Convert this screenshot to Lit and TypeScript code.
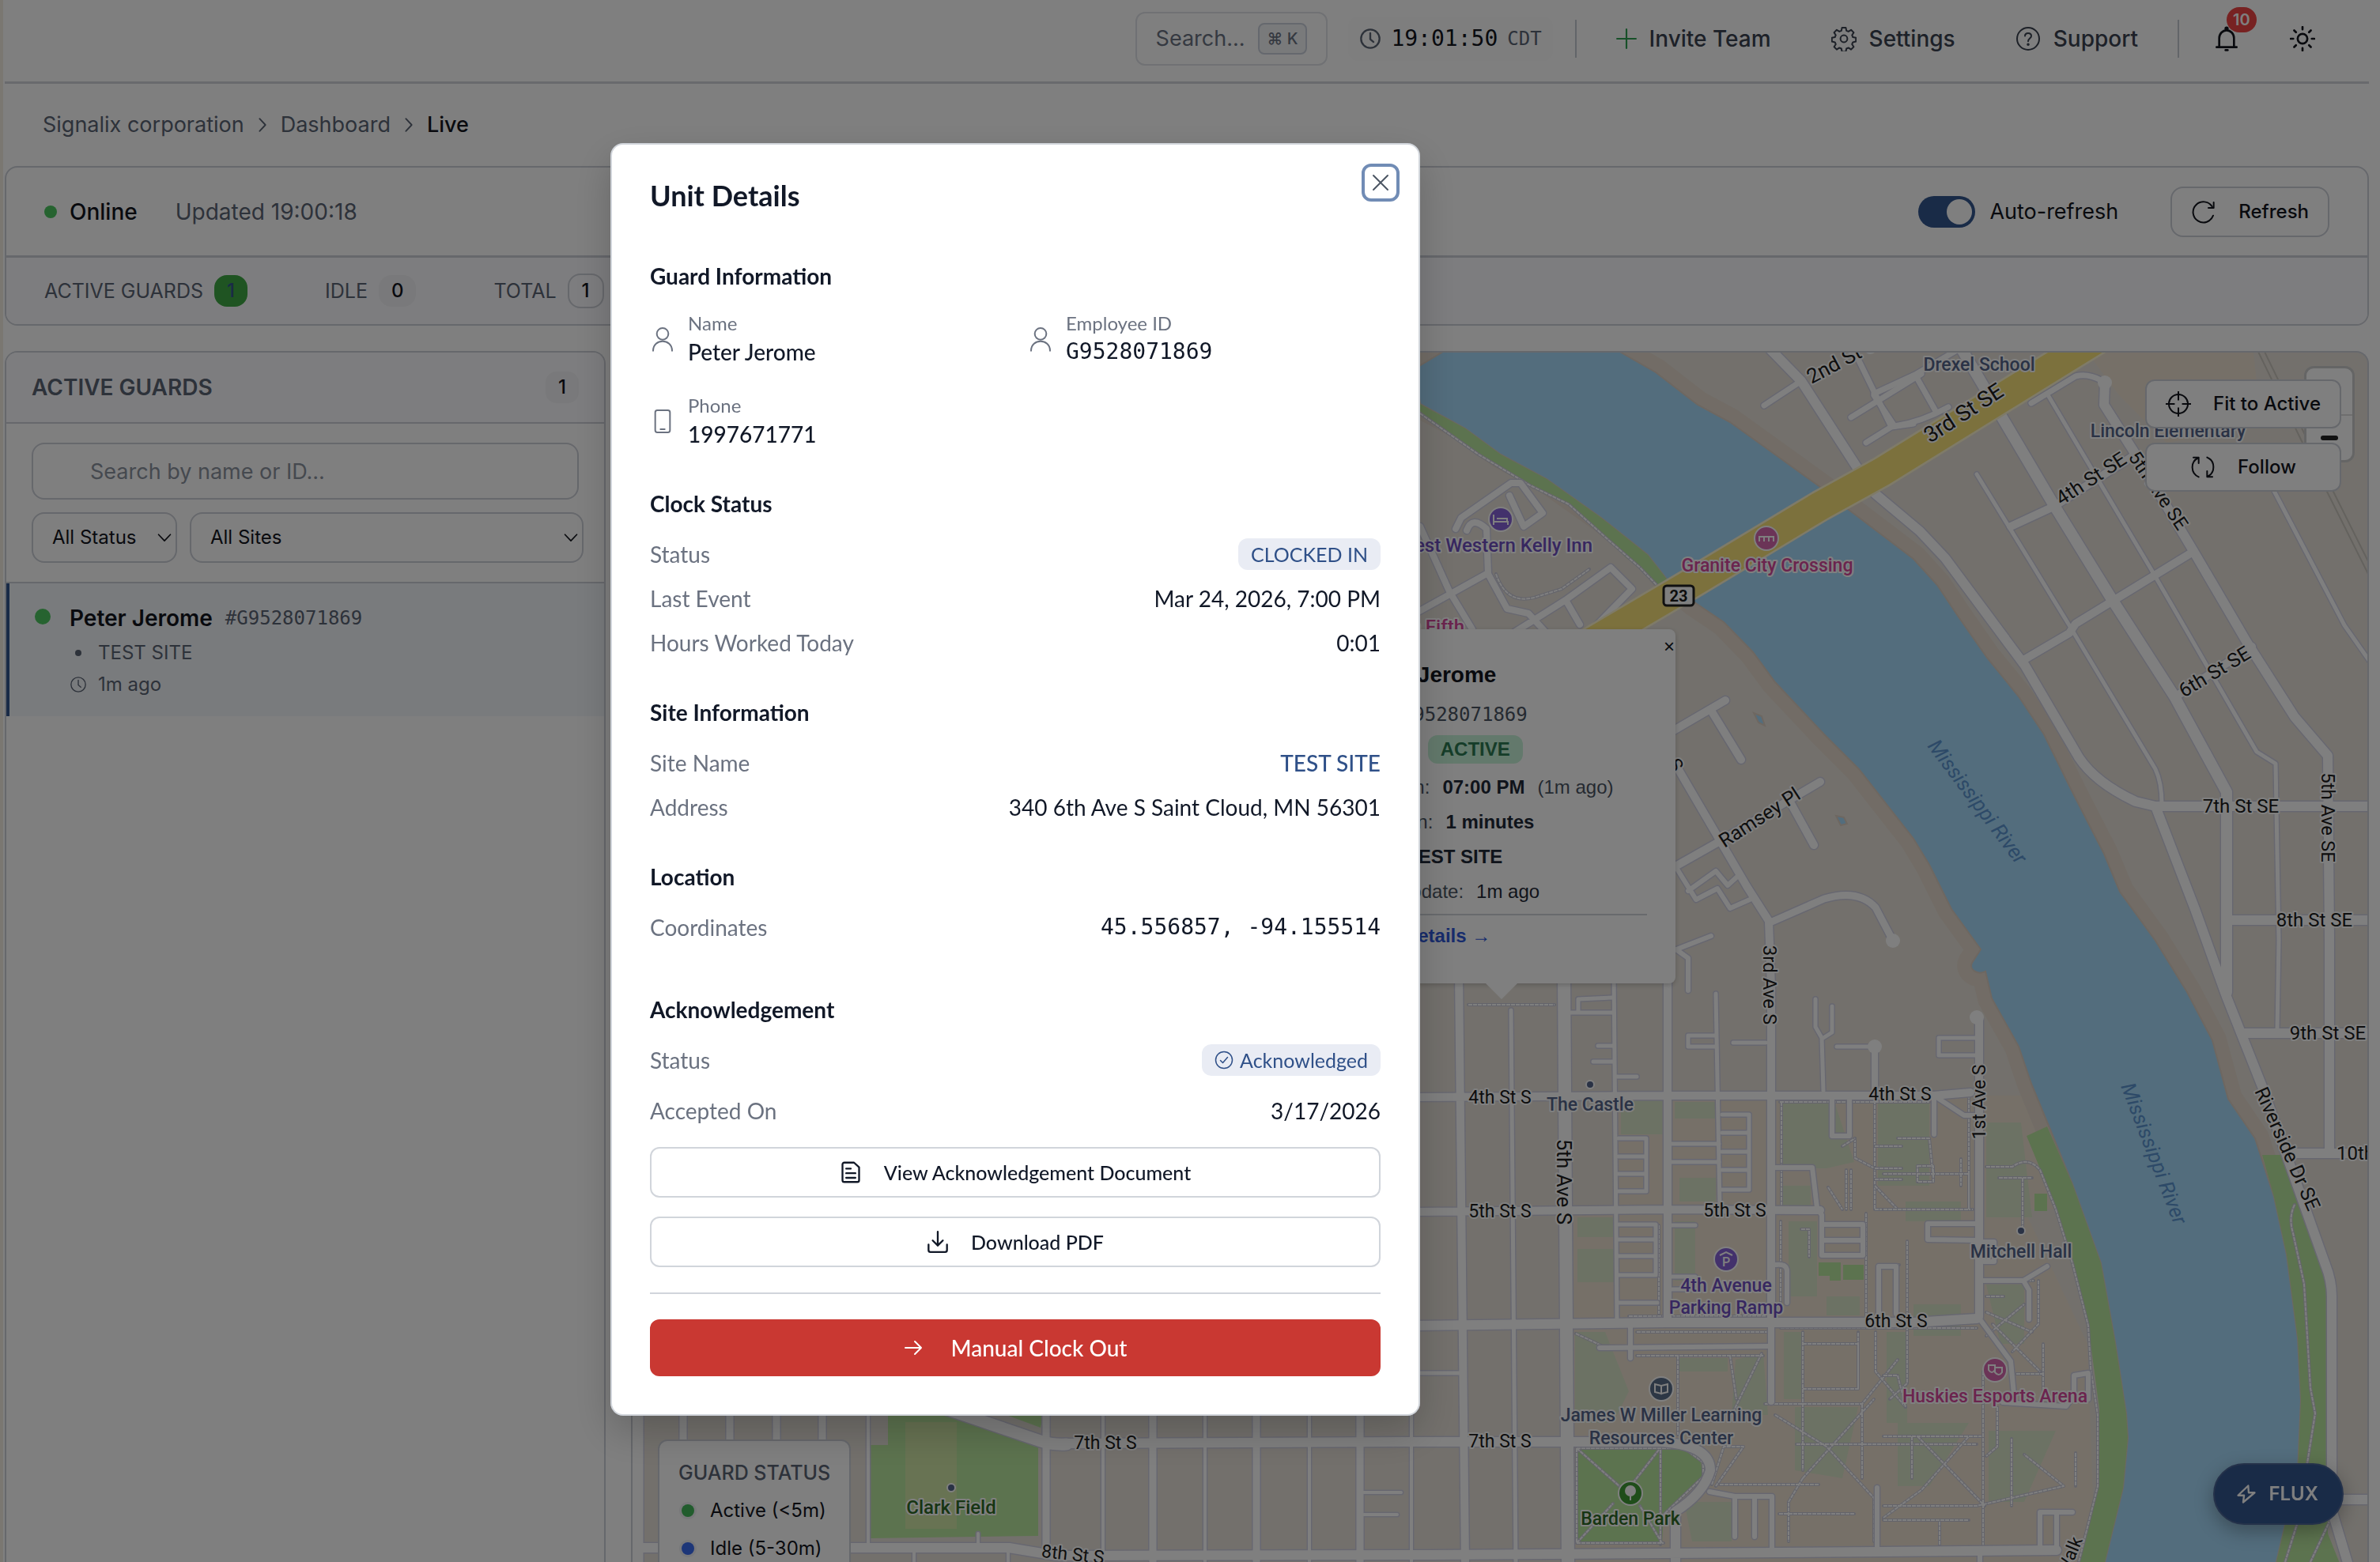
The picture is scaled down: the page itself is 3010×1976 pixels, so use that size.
import { LitElement, html, svg, css, nothing } from "lit";
import { customElement, state } from "lit/decorators.js";

/* ---------- icons (24-unit grid, stroked) ---------- */

const shapes = {
  clock: svg`<circle cx="12" cy="12" r="10"/><path d="M12 6v6.5l3.5 3"/>`,
  plus: svg`<path d="M12 1v22M1 12h22"/>`,
  gear: svg`<circle cx="12" cy="12" r="3.3"/><path d="M10.2 1.5h3.6l.6 2.9 1.9.8 2.5-1.6 2.5 2.5-1.6 2.5.8 1.9 2.9.6v3.6l-2.9.6-.8 1.9 1.6 2.5-2.5 2.5-2.5-1.6-1.9.8-.6 2.9h-3.6l-.6-2.9-1.9-.8-2.5 1.6-2.5-2.5 1.6-2.5-.8-1.9-2.9-.6v-3.6l2.9-.6.8-1.9-1.6-2.5 2.5-2.5 2.5 1.6 1.9-.8z"/>`,
  help: svg`<circle cx="12" cy="12" r="10.5"/><path d="M9 9.4c0-3.6 6-3.6 6 0 0 2.2-3 2.4-3 5"/><circle cx="12" cy="17.4" r=".6" fill="currentColor"/>`,
  bell: svg`<path d="M2.500 20h19M5 20v-8.500a7 7.500 0 0 1 14 0V20"/><circle cx="12" cy="2.300" r="1" fill="currentColor"/><path d="M11 22.800h2"/>`,
  sun: svg`<circle cx="12" cy="12" r="4.600"/><path d="M12 .8v2.400M12 20.800v2.400M.8 12h2.400M20.800 12h2.400M4.100 4.100l1.700 1.700M18.200 18.200l1.700 1.700M4.100 19.900l1.700-1.700M18.200 5.800l1.700-1.700"/>`,
  refresh: svg`<path d="M21 15.500A9.800 9.800 0 1 1 20 7"/><path d="M21.500 3v5.200h-5"/>`,
  follow: svg`<path d="M8 21.300A10 10 0 0 1 7.500 3.200M3 2.800h5v5.500M16 2.700a10 10 0 0 1 .5 18.100M21 21.200h-5v-5.500"/>`,
  target: svg`<circle cx="12" cy="12" r="9"/><path d="M12 0v8M12 16v8M0 12h8M16 12h8"/>`,
  bolt: svg`<path d="M14 3 3 13.500h6.500L8.500 21 21 10.500h-6.500z"/>`,
  user: svg`<circle cx="12" cy="7" r="5.500"/><path d="M3 23c0-12 18-12 18 0"/>`,
  phone: svg`<rect x="5" y="1.500" width="14" height="21" rx="2"/><path d="M10 19.500h4"/>`,
  check: svg`<circle cx="12" cy="12" r="10.500"/><path d="m7.500 12.500 3 3 6-7"/>`,
  doc: svg`<path d="M3 3.500a2 2 0 0 1 2-2h10.500l5.500 5v14a2 2 0 0 1-2 2H5a2 2 0 0 1-2-2zM7 8h5M7 13h10M7 18h10"/>`,
  download: svg`<path d="M12 1v15M6.500 10.500 12 16l5.500-5.500M2 15v6a2 2 0 0 0 2 2h16a2 2 0 0 0 2-2v-6"/>`,
  arrow: svg`<path d="M2 12h20M14 4l8 8-8 8"/>`,
  close: svg`<path d="M3 3l18 18M21 3 3 21"/>`,
  chevron: svg`<path d="M3 7.500 12 17l9-9.500"/>`,
  crumb: svg`<path d="M8 3.500l8 8.500-8 8.500"/>`,
};

const icon = (name: keyof typeof shapes, cls = "") => html`
  <svg class="icon ${cls}" viewBox="0 0 24 24" aria-hidden="true">${shapes[name]}</svg>
`;

const base = css`
  * {
    box-sizing: border-box;
  }
  :host {
    display: block;
    font-family: Inter, "Liberation Sans", sans-serif;
    font-size: 28px;
    line-height: 40px;
    color: #12151d;
  }
  button,
  input,
  select {
    font: inherit;
    color: inherit;
    margin: 0;
  }
  button {
    background: none;
    border: 0;
    padding: 0;
    cursor: pointer;
  }
  a {
    color: inherit;
    text-decoration: none;
  }
  h2,
  h3,
  p,
  dl,
  dd,
  dt,
  ol,
  ul {
    margin: 0;
    padding: 0;
    list-style: none;
  }
  .icon {
    width: 32px;
    height: 32px;
    flex: none;
    fill: none;
    stroke: currentColor;
    stroke-width: 1.5;
    stroke-linecap: round;
    stroke-linejoin: round;
  }
  .s24 {
    width: 24px;
    height: 24px;
  }
  .mono {
    font-family: "DejaVu Sans Mono", "Liberation Mono", monospace;
  }
`;

/* ---------- top bar ---------- */

@customElement("top-bar")
export class TopBar extends LitElement {
  static styles = [
    base,
    css`
      .bar {
        display: flex;
        align-items: center;
        justify-content: flex-end;
        height: 106px;
        padding: 0 68px 6px 0;
        border-bottom: 3px solid #d2d5db;
      }
      .search {
        display: flex;
        align-items: center;
        gap: 16px;
        height: 68px;
        padding: 0 24px;
        border: 2px solid #e0e3e8;
        border-radius: 12px;
        font-size: 27px;
        color: #6a7282;
      }
      kbd {
        font: 500 20px/36px Inter, "DejaVu Sans", sans-serif;
        padding: 0 10px;
        border: 2px solid #cbd1dc;
        border-radius: 8px;
        background: #f2f4f7;
      }
      .clock {
        display: flex;
        align-items: center;
        gap: 12px;
        margin: 0 28px 0 26px;
        padding: 8px 14px;
        border-radius: 12px;
        background: #fcfcfd;
      }
      .clock .icon,
      .clock small {
        color: #5b6474;
      }
      .clock .icon {
        width: 28px;
        height: 28px;
        stroke-width: 2;
      }
      .clock small {
        font-size: 24px;
      }
      .rule {
        width: 2px;
        height: 48px;
        background: #c5cad3;
      }
      nav {
        display: flex;
        gap: 76px;
        margin: 0 50px;
      }
      nav a {
        display: flex;
        align-items: center;
        gap: 16px;
        font-weight: 500;
        color: #3b4250;
      }
      nav .green {
        width: 26px;
        height: 26px;
        color: #2fa052;
      }
      .bell {
        position: relative;
        display: flex;
        margin: 0 64px 0 44px;
      }
      .count {
        position: absolute;
        left: 16px;
        top: -24px;
        padding: 0 8px;
        border-radius: 16px;
        background: #ef4444;
        color: #fff;
        font: 600 20px/32px Inter, sans-serif;
      }
      .theme {
        display: flex;
      }
      .theme .icon,
      .bell .icon,
      nav .green {
        stroke-width: 2;
      }
    `,
  ];

  render() {
    return html`
      <header class="bar">
        <button class="search">Search...<kbd>⌘ K</kbd></button>
        <div class="clock mono">${icon("clock")}<span>19:01:50</span><small>CDT</small></div>
        <span class="rule"></span>
        <nav aria-label="Main">
          <a href="#invite">${icon("plus", "green")}Invite Team</a>
          <a href="#settings">${icon("gear")}Settings</a>
          <a href="#support">${icon("help")}Support</a>
        </nav>
        <span class="rule"></span>
        <button class="bell" aria-label="Notifications">${icon("bell")}<span class="count">10</span></button>
        <button class="theme" aria-label="Toggle theme">${icon("sun")}</button>
      </header>
    `;
  }
}

/* ---------- status card ---------- */

@customElement("status-card")
export class StatusCard extends LitElement {
  static styles = [
    base,
    css`
      .card {
        border: 2px solid #cdd0d8;
        border-radius: 16px;
        overflow: hidden;
      }
      .live {
        display: flex;
        align-items: center;
        height: 114px;
        padding: 0 48px;
        border-bottom: 3px solid #cdd0d8;
      }
      .dot {
        width: 16px;
        height: 16px;
        margin-right: 16px;
        border-radius: 50%;
        background: #4cc760;
      }
      strong {
        font-weight: 500;
      }
      .updated {
        flex: 1;
        margin-left: 48px;
        color: #5b6474;
      }
      .auto {
        display: flex;
        align-items: center;
        gap: 18px;
        margin-right: 66px;
        font-size: 27px;
      }
      .auto input {
        appearance: none;
        display: flex;
        justify-content: flex-end;
        width: 72px;
        height: 40px;
        padding: 4px;
        border-radius: 20px;
        background: #33568f;
      }
      .auto input::before {
        content: "";
        width: 32px;
        border-radius: 50%;
        background: #fff;
      }
      .refresh {
        display: flex;
        align-items: center;
        gap: 28px;
        height: 64px;
        padding: 0 24px;
        border: 2px solid #cdd0d8;
        border-radius: 16px;
        font-size: 24px;
        font-weight: 500;
      }
      .stats {
        display: flex;
        align-items: center;
        gap: 98px;
        height: 84px;
        padding: 0 48px;
        background: #fbfbfe;
        font-size: 25px;
        color: #5b6474;
      }
      .stats div {
        display: flex;
        align-items: center;
        gap: 14px;
      }
      .stats dd {
        padding: 0 16px;
        border-radius: 16px;
        background: #f2f3f6;
        color: #12151d;
        font-size: 24px;
        font-weight: 500;
      }
      .stats .on {
        background: #3fa845;
        color: #33568f;
      }
      .stats .all {
        border: 2px solid #cdd0d8;
        background: none;
      }
    `,
  ];

  @state() private auto = true;

  render() {
    return html`
      <section class="card">
        <div class="live">
          <span class="dot"></span><strong>Online</strong>
          <span class="updated">Updated 19:00:18</span>
          <label class="auto">
            <input
              type="checkbox"
              role="switch"
              .checked=${this.auto}
              @change=${(e: Event) => (this.auto = (e.target as HTMLInputElement).checked)}
            />Auto-refresh
          </label>
          <button class="refresh">${icon("refresh")}Refresh</button>
        </div>
        <dl class="stats">
          <div><dt>ACTIVE GUARDS</dt><dd class="on">1</dd></div>
          <div><dt>IDLE</dt><dd>0</dd></div>
          <div><dt>TOTAL</dt><dd class="all">1</dd></div>
        </dl>
      </section>
    `;
  }
}

/* ---------- guard list ---------- */

@customElement("guard-panel")
export class GuardPanel extends LitElement {
  static styles = [
    base,
    css`
      .panel {
        height: 100%;
        border: 2px solid #cdd0d8;
        border-bottom: 0;
        border-radius: 16px 16px 0 0;
        overflow: hidden;
      }
      .head {
        display: flex;
        align-items: center;
        justify-content: space-between;
        height: 90px;
        padding: 0 32px;
        border-bottom: 2px solid #cdd0d8;
        background: #fbfbfe;
      }
      h2 {
        font-size: 28px;
        font-weight: 600;
        color: #5b6474;
      }
      .count {
        padding: 0 16px;
        border-radius: 14px;
        background: #f2f3f6;
        font-size: 24px;
        font-weight: 500;
      }
      .filters {
        display: grid;
        grid-template-columns: 184px 1fr;
        gap: 16px;
        padding: 24px 26px 24px 32px;
        border-bottom: 2px solid #cdd0d8;
      }
      .find {
        grid-column: 1 / -1;
        height: 72px;
        margin-right: 6px;
        padding: 0 72px;
        border: 2px solid #cdd0d8;
        border-radius: 16px;
        background: none;
        font-size: 27px;
      }
      .find::placeholder {
        color: #8b929e;
        opacity: 1;
      }
      .pick {
        display: grid;
        align-items: center;
        font-size: 24px;
      }
      .pick > * {
        grid-area: 1 / 1;
      }
      .pick select {
        appearance: none;
        height: 64px;
        padding: 0 24px;
        border: 2px solid #cdd0d8;
        border-radius: 16px;
        background: none;
      }
      .pick .icon {
        width: 20px;
        height: 20px;
        margin-right: 6px;
        justify-self: end;
        stroke-width: 2;
        pointer-events: none;
      }
      .guard {
        display: grid;
        grid-template-columns: 44px 1fr;
        padding: 24px 32px 20px;
        border-left: 4px solid #33568f;
        background: #f3f6fa;
      }
      .state {
        width: 20px;
        height: 20px;
        margin-top: 8px;
        border-radius: 50%;
        background: #4cc760;
      }
      .who {
        display: flex;
        align-items: center;
        gap: 16px;
        margin-bottom: 4px;
        font-weight: 600;
      }
      .who span,
      .meta {
        font-size: 24px;
        font-weight: 400;
        color: #5b6474;
      }
      .meta {
        display: grid;
        grid-template-columns: 22px 1fr;
        align-items: center;
        column-gap: 14px;
      }
      .meta .icon {
        width: 22px;
        height: 22px;
      }
      .bullet {
        justify-self: center;
        width: 8px;
        height: 8px;
        border-radius: 50%;
        background: #5b6474;
      }
    `,
  ];

  render() {
    return html`
      <aside class="panel">
        <div class="head"><h2>ACTIVE GUARDS</h2><span class="count">1</span></div>
        <div class="filters">
          <input class="find" type="search" aria-label="Search guards" placeholder="Search by name or ID..." />
          <label class="pick">
            <select aria-label="Status"><option>All Status</option></select>${icon("chevron")}
          </label>
          <label class="pick">
            <select aria-label="Site"><option>All Sites</option></select>${icon("chevron")}
          </label>
        </div>
        <div class="guard">
          <span class="state"></span>
          <div>
            <p class="who">Peter Jerome <span class="mono">#G9528071869</span></p>
            <p class="meta"><i class="bullet"></i>TEST SITE</p>
            <p class="meta">${icon("clock")}1m ago</p>
          </div>
        </div>
      </aside>
    `;
  }
}

/* ---------- map ---------- */

const RIVER =
  "M1790 466L1833 440H2040L2094 471 2147 512 2188 534 2245 575 2306 619 2337 644 2420 707 2450 740 2476 779 2513 832 2553 881 2585 929 2621 1002 2661 1080 2681 1128 2726 1190 2766 1255 2798 1316 2818 1390 2852 1440 2876 1514 2892 1587 2906 1693 2910 1772 2906 1861 2878 1980H2661L2685 1882 2691 1819 2689 1788 2675 1698 2657 1598 2621 1498 2593 1429 2569 1371 2553 1324 2519 1263 2511 1229C2500 1234 2490 1226 2494 1218L2505 1201 2468 1150 2440 1094 2420 1061 2351 973 2307 929 2245 863 2217 825 2180 787 2143 762 2109 734 2084 702 2025 655 1956 606 1898 575 1853 542 1796 511z";

const LAWNS = [
  "M1790 508L1853 542 1898 575 1956 606 2025 655 2084 702 2109 734 2098 743 2074 718 2057 706 2033 682 1984 638 1935 614 1870 575 1829 548 1796 520z",
  "M2563 1437L2589 1425 2621 1498 2657 1598 2675 1698 2689 1788 2691 1819 2685 1882 2661 1980H2629L2651 1888 2655 1782 2641 1677 2621 1598 2597 1519 2577 1471z",
  "M2861 1461H2890L2914 1529 2942 1614 2944 1940 2960 1980H2878L2906 1861 2910 1772 2906 1693 2892 1587 2876 1514z",
  "M1123 1780V1828H1100V1946L1313 1943V1830L1189 1785z",
  "M1259 1785H1320L1316 1806z",
  "M1993 1831H2140Q2154 1840 2152 1872L2104 1914 2102 1954H1993z",
  "M2300 1597H2328V1620H2314V1614H2300zM2331 1600H2357V1619H2331z",
  "M2573 1510H2589V1532H2573z",
];

const QUADS = [
  "M2050 1392H2110V1435H2050z", "M2118 1394H2170V1415H2118z", "M2252 1394H2320L2345 1470 2310 1478H2252z",
  "M2375 1394H2440V1500H2375z", "M2124 1490H2170V1520H2124z", "M2118 1545H2144V1620H2118z",
  "M1995 1540H2042V1565H1995zM1995 1580H2042V1622H1995z", "M2262 1545H2298V1640H2262z",
  "M1992 1685H2030L2060 1760 2040 1800H1992z", "M2120 1718H2185V1735H2120z", "M2310 1640H2352V1664H2310z",
  "M2256 1685H2280V1770H2256z", "M2195 1720L2230 1712 2236 1790H2190z", "M2386 1685H2412V1800H2386z",
  "M2270 1780H2350L2330 1870 2270 1860z", "M2512 1420H2556L2570 1540H2512z", "M2512 1625H2560V1700H2530z",
  "M2400 1800H2490L2440 1880H2400z", "M2130 1900H2190V1950H2140z", "M2420 1690H2480V1650H2420z",
  "M2515 1810H2600L2560 1900H2515z", "M2410 1520H2480V1545H2410z", "M2254 1500H2290V1525H2254z",
];

/* [width, path] */
const ROADS: [number, string][] = [
  [5, "M2876 621L2965 791 2998 838M2589 498L2721 721 2854 951 2878 966 2882 1190 2880 1303M2500 600L2617 791 2726 973Q2734 990 2734 1017"],
  [7, "M2370 498L2422 474 2480 440M2422 474L2448 520M2370 500L2396 539Q2430 534 2464 515M2569 510L2625 476Q2640 472 2657 481"],
  [7, "M2231 513L2278 482 2240 440M2343 440L2392 540M2341 528L2430 473M2360 560L2392 540 2420 536M2237 440L2278 482"],
  [10, "M2543 666L2597 641 2701 575M2559 835L2617 801 2625 789 2772 699M2752 881L2848 818"],
  [12, "M2237 440L2278 482 2351 595 2372 625 2428 672 2460 706 2561 842 2629 958Q2650 990 2701 1014L2726 1020H2998M2820 1164H2998M2838 1307H2998M2895 1459H2998"],
  [14, "M2480 440L2597 638 2669 755 2750 881 2816 1002V1255"],
  [12, "M2662 484L2661 512 2701 575 2774 697 2842 813 2902 907 2944 956 2946 1190V1456"],
  [12, "M2726 1020L2776 1150 2816 1261 2862 1377 2914 1524 2941 1600Q2949 1620 2949 1640V1910L2970 1980M2950 1897H2998"],
  [8, "M1796 666L1833 748 1862 796M1790 776L1880 726M1841 669L1848 655 1911 611H1923L1951 649 1927 666 1909 627M1855 671Q1862 652 1880 669L1882 726 1906 770 1933 776 1955 800M1980 759L2037 718 2064 745 2020 790M1980 759L1998 790M1915 800L1980 759"],
  [10, "M2119 967L2209 1121 2237 1165 2240 1250V1673M2119 1096L2172 1066 2302 989M2262 1011L2294 1069M2110 928L2182 886M2166 902L2202 961"],
  [9, "M2241 1166L2307 1137Q2350 1124 2372 1148L2394 1190"],
  [6, "M2119 1096L2145 1138 2172 1124 2188 1149 2213 1138M2135 1127L2170 1102 2185 1120 2196 1110M2110 1205L2164 1184M2121 1202L2135 1212V1253"],
  [10, "M1790 1388L2107 1386H2445L2492 1382M1790 1533L2107 1530 2302 1531M1845 1230L1853 1980M2109 1230V1673M2503 1290V1666"],
  [16, "M1978 1230L1983 1980"],
  [12, "M1790 1677L2107 1673H2420L2500 1668M1340 1826L1790 1824H2100Q2163 1828 2163 1860 2155 1889 2119 1912V1980M805 1958H1276L1336 1968 1810 1967 2380 1963 2601 1961"],
  [5, "M1911 1278L1917 1980M2041 1230L2045 1671M2170 1257L2175 1528M1790 1737H1845"],
  [5, "M2296 1264V1299L2304 1313 2306 1380M2317 1273V1306L2306 1313M2323 1324H2370M2192 1319H2233M2135 1310H2170M2135 1310V1324H2170M2021 1323H2041M2015 1343H2041M2045 1362H2070M1984 1281H2041M1996 1281V1264L2039 1262M2452 1313H2498M2452 1313V1335H2498"],
  [5, "M2047 1440H2082V1507H2047M2047 1463H2082M2047 1485H2082M2178 1410H2212V1505H2178M2178 1433H2212M2178 1457H2212M2178 1480H2212M2115 1447H2174M2115 1470H2174M2047 1549H2094V1613H2047M2047 1568H2094M2047 1589H2094M2047 1648H2096M2115 1550H2144M2115 1615H2144M2115 1631H2144"],
  [6, "M2245 1477H2292L2298 1528 2304 1537V1588H2356V1549H2304M2304 1569H2356M2317 1389V1437H2339V1389M2245 1600Q2260 1598 2260 1608V1648M2376 1662V1602H2398V1662M2438 1548H2500M2438 1548V1568L2500 1569M2509 1571H2522V1596H2509M2509 1620H2559L2589 1602M2559 1620L2566 1632V1669"],
  [6, "M2023 1705L2239 1703M2062 1680V1718M2162 1887L2194 1893H2241V1960M2194 1893V1944M2219 1893V1944M2374 1882V1958M2504 1669L2543 1722 2547 1764M2533 1774L2613 1779 2623 1765V1740L2641 1737V1770M2580 1960V1913H2621M2601 1960V1913M2446 1384V1435M2452 1390L2484 1411H2498M2504 1964V1980"],
  [8, "M2240 1673V1773M2371 1324V1382"],
  [9, "M864 1780V1980M923 1780V1980M982 1780V1980M1040 1780V1980M1323 1780V1965M1458 1780V1980M1589 1780V1980M1720 1780V1980"],
  [4, "M1098 1780V1955M1395 1780V1965M1524 1780V1980M1656 1780V1980M1785 1780V1980M1237 1940V1955M1156 1958V1980M1275 1958V1980M1725 1888H1772M1725 1916H1767"],
  [15, "M1175 1775L1316 1823Q1330 1828 1349 1827M806 440V1980"],
];

const PATHS = [
  "M1796 523L1870 575 1935 614 1984 638 2033 682 2074 718 2098 743", "M1892 726Q1905 765 1940 756L1975 745 2010 720",
  "M1857 1271H1966", "M2251 1394H2440M2253 1394V1528M2371 1386V1530M2346 1440V1465L2371 1478M2371 1530H2495M2252 1680H2500M2252 1545V1660M2360 1535V1665",
  "M2335 1480V1530M2341 1480V1530M2312 1502L2330 1530M2278 1555H2288V1590M2371 1450H2405M2371 1478H2405M2371 1492H2405M2371 1500L2400 1530",
  "M1993 1687L2025 1702M2070 1685H2235M2070 1715H2230M2122 1715V1815M2188 1715L2196 1770M2228 1712L2190 1790M2060 1665H2235M2098 1550V1662M2330 1450L2346 1440",
  "M2280 1685V1860M2280 1700H2350V1757H2280M2350 1757V1685M2232 1776H2355L2400 1720M2372 1685V1735L2410 1780M2355 1776V1870M2245 1790L2310 1830 2370 1895V1950M2280 1870L2370 1770M2175 1878H2300M2280 1870L2262 1900V1950M2165 1878L2180 1830H2205L2170 1880M2272 1827H2500M2250 1915H2345",
  "M1994 1832L2048 1880M2098 1834L2062 1880M1994 1952L2040 1902M2102 1952L2074 1905M1994 1832V1952M2100 1834V1954M1994 1832H2130L2154 1850V1868L2104 1916M1994 1952H2104",
  "M2512 1476H2545Q2565 1462 2580 1480L2600 1530 2621 1598 2641 1677 2644 1730 2653 1790V1880L2629 1976", "M2902 1524Q2894 1540 2900 1560L2914 1624 2922 1756 2928 1788 2918 1851M2890 1976L2906 1925M2922 1976L2946 1925",
  "M2400 1440H2440L2445 1490M2382 1485H2490V1530M2382 1530H2492M2425 1475H2445V1495H2425zM2480 1466V1500M2490 1385V1530M2528 1490H2570M2558 1490V1560M2412 1570V1750L2390 1770M2382 1600H2402",
  "M2382 1740H2400L2410 1780M2382 1817H2506M2418 1817V1870M2425 1817L2510 1905M2382 1920L2430 1885 2490 1817M2382 1905H2500L2610 1880 2560 1840M2453 1925V1960M2508 1735V1960M2544 1820V1905M2512 1660L2570 1685M2512 1690L2560 1650M2512 1640H2534M2540 1620H2572M2578 1620V1675L2545 1710M2520 1675L2580 1735M2584 1700V1765M2550 1738H2584M2526 1780V1830L2512 1842M2625 1838V1880M2382 1923H2490",
];

type Label = [text: string, x: number, y: number, cls: string, size: number, turn?: number];

const LABELS: Label[] = [
  ["2nd St S", 2291, 486, "street start", 26, -28],
  ["Drexel School", 2503, 469, "place", 23],
  ["3rd St SE", 2441, 561, "street start", 28, -33],
  ["Lincoln Elementary", 2742, 553, "place", 23],
  ["4th St SE", 2607, 640, "street start", 25, -33],
  ["5th Ave SE", 2691, 578, "street start", 24, 56],
  ["6th St SE", 2762, 883, "street start", 25, -31],
  ["7th St SE", 2834, 1028, "street", 24],
  ["5th Ave SE", 2936, 1034, "street", 24, 90],
  ["8th St SE", 2927, 1172, "street", 24],
  ["9th St SE", 2944, 1315, "street", 24],
  ["10th St SE", 2955, 1467, "street start", 24],
  ["Riverside Dr SE", 2851, 1380, "street start", 25, 66],
  ["Mississippi River", 2437, 944, "water start", 26, 53],
  ["Mississippi River", 2682, 1374, "water start", 26, 69],
  ["Granite City Crossing", 2235, 723, "pink", 23],
  ["Best Western Kelly Inn", 2014, 698, "purple end", 24],
  ["7 West on Fifth", 1852, 801, "pink end", 24],
  ["Ramsey Pl", 2181, 1073, "street start", 25, -33],
  ["4th Ave S", 2116, 978, "street end", 24, 58],
  ["3rd Ave S", 2230, 1246, "street", 24, 90],
  ["4th St S", 1897, 1396, "street", 23],
  ["The Castle", 2011, 1405, "place", 23],
  ["5th Ave S", 1969, 1495, "street", 26, 90],
  ["5th St S", 1897, 1540, "street", 23],
  ["5th St S", 2194, 1539, "street", 23],
  ["4th St S", 2403, 1392, "street", 23],
  ["1st Ave S", 2511, 1394, "street", 23, -90],
  ["4th Avenue", 2183, 1634, "purple", 23],
  ["Parking Ramp", 2183, 1662, "purple", 23],
  ["6th St S", 2398, 1679, "street", 23],
  ["James W Miller Learning", 2101, 1798, "place", 23],
  ["Resources Center", 2101, 1827, "place", 23],
  ["Huskies Esports Arena", 2523, 1774, "pink", 23],
  ["Mitchell Hall", 2556, 1591, "place", 23],
  ["Barden Park", 2062, 1929, "park", 23],
  ["Clark Field", 1203, 1915, "park", 24],
  ["7th St S", 1897, 1831, "street", 23],
  ["7th St S", 1398, 1833, "street", 23],
  ["8th St S", 1356, 1974, "street", 23, 6],
  ["Beaver Island Walk", 2634, 1948, "street end", 23, -68],
];

const DOTS = [[2011, 1372], [2556, 1557], [1203, 1882]];

@customElement("live-map")
export class LiveMap extends LitElement {
  static styles = [
    base,
    css`
      .frame {
        position: relative;
        height: 100%;
        border: 2px solid #cdd0d8;
        border-bottom: 0;
        border-radius: 16px 16px 0 0;
        overflow: hidden;
        background: #e6e1d9;
      }
      .canvas {
        display: block;
        width: 100%;
        height: 100%;
      }
      .campus {
        fill: #ede1d1;
      }
      .river {
        fill: #a6dafa;
        stroke: #dccfc2;
        stroke-width: 2;
      }
      .bank {
        fill: none;
        stroke: #e4d9cd;
        stroke-width: 36;
      }
      .lawn {
        fill: #b9e69e;
      }
      .pitch {
        fill: #d0e6a6;
      }
      .quad {
        fill: #d8e4c8;
      }
      .road,
      .casing,
      .trail,
      .trail-in,
      .hwy,
      .hwy-case,
      .rail {
        fill: none;
        stroke-linecap: round;
        stroke-linejoin: round;
        stroke: #fff;
      }
      .casing {
        stroke: #cfcfe0;
      }
      .trail {
        stroke: #c8c8d6;
        stroke-width: 4;
      }
      .trail-in {
        stroke-width: 2;
        stroke-dasharray: 5 1;
        stroke-linecap: butt;
      }
      .hwy {
        stroke: #f9e27a;
        stroke-width: 36;
      }
      .hwy-case {
        stroke: #fff6d0;
        stroke-width: 41;
      }
      .rail {
        stroke: #c9c4bc;
        stroke-width: 2;
      }
      text {
        font-family: Roboto, "Liberation Sans", sans-serif;
        font-weight: 500;
        text-anchor: middle;
        paint-order: stroke;
        stroke: #fff;
        stroke-width: 4;
        stroke-linejoin: round;
      }
      .start {
        text-anchor: start;
      }
      .end {
        text-anchor: end;
      }
      .street {
        fill: #1c1c1c;
        font-weight: 400;
      }
      .place {
        fill: #55658a;
      }
      .pink {
        fill: #d6489c;
      }
      .purple {
        fill: #6f4fc0;
      }
      .park {
        fill: #2f6b26;
      }
      .water {
        fill: #5b94d0;
        stroke: none;
        font-style: italic;
        font-weight: 400;
      }
      .shield {
        fill: #fff;
        stroke: #222;
        stroke-width: 3;
      }
      .plain {
        stroke: none;
        fill: #1c1c1c;
        font-weight: 700;
      }
      .poi {
        stroke: #fff;
        stroke-width: 2;
      }
      .glyph {
        fill: none;
        stroke: #fff;
        stroke-width: 2;
      }
      .white {
        fill: #fff;
        stroke: none;
      }
      .zoom {
        position: absolute;
        right: 16px;
        top: 17px;
        width: 64px;
        border: 3px solid #cbcbcb;
        border-radius: 12px;
        background: #fff;
      }
      .zoom button {
        display: block;
        width: 100%;
        height: 58px;
        font-size: 40px;
        font-weight: 700;
      }
      .zoom button + button {
        border-top: 2px solid #ddd;
      }
      .minus {
        display: block;
        width: 22px;
        height: 6px;
        margin: auto;
        border-radius: 3px;
        background: #222;
      }
      .tools {
        position: absolute;
        right: 33px;
        top: 34px;
        display: grid;
        gap: 18px;
      }
      .tools button {
        display: flex;
        align-items: center;
        justify-content: center;
        gap: 28px;
        height: 62px;
        padding: 0 24px;
        border: 2px solid #cdd0d8;
        border-radius: 12px;
        background: #fff;
        font-size: 24px;
        font-weight: 500;
      }
      .legend {
        position: absolute;
        left: 32px;
        bottom: -60px;
        height: 215px;
        padding: 20px 24px;
        border: 2px solid #cdd0d8;
        border-radius: 12px;
        background: #fff;
        font-size: 24px;
        white-space: nowrap;
      }
      .legend h3 {
        margin-bottom: 4px;
        font-size: 25px;
        font-weight: 500;
        color: #5b6474;
      }
      .legend li {
        display: flex;
        align-items: center;
        gap: 20px;
        height: 48px;
        padding-left: 4px;
      }
      .legend i {
        width: 16px;
        height: 16px;
        border-radius: 50%;
        box-shadow: 0 0 0 3px #f0f1f4;
      }
      .legend .go {
        background: #42b85a;
      }
      .legend .idle {
        background: #3b6cf0;
      }
      .popup {
        position: absolute;
        left: 879px;
        top: 350px;
        width: 440px;
        padding: 34px 36px 42px;
        border-radius: 8px;
        background: #fff;
        font: 24px/36px "Liberation Sans", sans-serif;
        box-shadow: 0 2px 6px rgba(0, 0, 0, 0.2);
      }
      .popup::after {
        content: "";
        position: absolute;
        left: 200px;
        top: 100%;
        border: 20px solid transparent;
        border-top-color: #fff;
      }
      .popup h3 {
        margin-bottom: 14px;
        font-size: 28px;
        line-height: 48px;
        font-weight: 700;
      }
      .popup .id {
        line-height: 24px;
        margin-bottom: 12px;
        color: #4b5563;
      }
      .popup .line {
        display: flex;
        align-items: center;
        gap: 16px;
        min-height: 40px;
        margin-bottom: 4px;
        color: #4b5563;
      }
      .popup .line.top {
        margin-bottom: 8px;
      }
      .popup b {
        color: #1f2937;
      }
      .popup .tag {
        padding: 0 16px;
        border-radius: 12px;
        background: #c6f3d8;
        color: #2c7a52;
        font-weight: 700;
      }
      .popup .dark {
        color: #1f2937;
      }
      .popup .more {
        display: block;
        margin-top: 8px;
        padding-top: 8px;
        border-top: 2px solid #d1d5db;
        color: #2f58d8;
        font-weight: 700;
      }
      .popup .x {
        position: absolute;
        right: 0;
        top: 4px;
        width: 16px;
      }
    `,
  ];

  private label([text, x, y, cls, size, turn]: Label) {
    return svg`<text class=${cls} font-size=${size} x=${x} y=${y}
      transform=${turn ? `rotate(${turn} ${x} ${y})` : nothing}>${text}</text>`;
  }

  render() {
    return html`
      <div class="frame">
        <svg class="canvas" viewBox="800 446 2194 1530" preserveAspectRatio="xMinYMin slice" role="img" aria-label="Map of Saint Cloud">
          <path class="campus" d="M2045 1386H2245V1530H2045zM1990 1530H2560L2640 1700 2650 1976H1990V1824zM2245 1386H2563L2600 1530H2245zM2640 446H2850L2860 540 2740 560 2680 500z" />
          <path class="bank" d=${RIVER} />
          ${QUADS.map((d) => svg`<path class="quad" d=${d} />`)}
          <path class="river" d=${RIVER} />
          ${LAWNS.map((d) => svg`<path class="lawn" d=${d} />`)}
          <path class="pitch" d="M1145 1799H1210V1934H1145z" />
          <path class="river" d="M2218 902l10 4 4 12-8-4zM2322 1032l10 2 4 8-8 2z" />
          <path class="rail" d="M2856 445L2910 556 2995 726M2864 445L2918 556 2998 716" />
          ${PATHS.map((d) => svg`<path class="trail" d=${d} /><path class="trail-in" d=${d} />`)}
          ${ROADS.map(([w, d]) => svg`<path class="casing" stroke-width=${w + 3} d=${d} />`)}
          ${ROADS.map(([w, d]) => svg`<path class="road" stroke-width=${w} d=${d} />`)}
          <g class="white">
            <circle cx="2662" cy="484" r="9" /><circle cx="2394" cy="1190" r="9" />
            <circle cx="2371" cy="1324" r="9" /><circle cx="2500" cy="1287" r="9" />
          </g>
          <path class="hwy-case" d="M1990 826L2139 738 2302 640 2380 597 2660 424" />
          <path class="hwy" d="M1990 826L2139 738 2302 640 2380 597 2660 424" />
          ${DOTS.map(([x, y]) => svg`<circle class="poi" fill="#55658a" cx=${x} cy=${y} r="5" />`)}
          ${LABELS.map((l) => this.label(l))}
          <rect class="shield" x="2104" y="741" width="38" height="25" rx="4" />
          <text class="plain" x="2123" y="761" font-size="20">23</text>
          <circle class="poi" fill="#8662d8" cx="1898" cy="657" r="15" />
          <path class="glyph" d="M1889 651v13M1889 660h18v4M1893 656h13v4" />
          <circle class="poi" fill="#d768ae" cx="2234" cy="681" r="15" />
          <path class="glyph" d="M2225 685v-6h18v6M2231 685v-5M2237 685v-5" />
          <circle class="poi" fill="#8662d8" cx="2183" cy="1593" r="15" />
          <path class="glyph" d="M2175 1588l8-4 8 4" />
          <text class="white" x="2183" y="1602" font-size="16">P</text>
          <circle class="poi" fill="#5b6f8a" cx="2101" cy="1757" r="15" />
          <path class="glyph" d="M2101 1763v-10l-8-2v10zl8-2v-10l-8 2z" />
          <circle class="poi" fill="#d768ae" cx="2523" cy="1733" r="15" />
          <path class="glyph" d="M2515 1727h8v6q-4 6-8 0zM2523 1730h9v6q-4 6-9 0z" />
          <circle class="poi" fill="#3f9a35" cx="2062" cy="1889" r="15" />
          <circle class="white" cx="2062" cy="1886" r="7" /><path class="glyph" d="M2062 1890v8" />
        </svg>

        <div class="popup">
          <button class="x" aria-label="Close popup">×</button>
          <h3>Peter Jerome</h3>
          <p class="id mono">ID: G9528071869</p>
          <p class="line top">Status: <span class="tag">ACTIVE</span></p>
          <p class="line">Clock In: <b>07:00 PM</b> <span>(1m ago)</span></p>
          <p class="line">Duration: <b>1 minutes</b></p>
          <p class="line">Site: <b>TEST SITE</b></p>
          <p class="line">Last Update: <span class="dark">1m ago</span></p>
          <a class="more" href="#details">View Details →</a>
        </div>

        <div class="zoom">
          <button aria-label="Zoom in">+</button>
          <button aria-label="Zoom out"><span class="minus"></span></button>
        </div>
        <div class="tools">
          <button>${icon("target")}Fit to Active</button>
          <button>${icon("follow")}Follow</button>
        </div>
        <div class="legend">
          <h3>GUARD STATUS</h3>
          <ul>
            <li><i class="go"></i>Active (&lt;5m)</li>
            <li><i class="idle"></i>Idle (5-30m)</li>
          </ul>
        </div>
      </div>
    `;
  }
}

/* ---------- unit dialog ---------- */

@customElement("unit-dialog")
export class UnitDialog extends LitElement {
  static styles = [
    base,
    css`
      :host {
        font-family: Lato, "Open Sans", sans-serif;
        color: #111827;
      }
      .box {
        position: relative;
        width: 1024px;
        padding: 46px 48px 48px;
        border: 2px solid #d1d5db;
        border-radius: 16px;
        background: #fff;
        box-shadow: 0 20px 50px rgba(0, 0, 0, 0.2);
      }
      .x {
        position: absolute;
        top: 24px;
        right: 24px;
        display: grid;
        place-items: center;
        width: 48px;
        height: 48px;
        border: 4px solid #718cb5;
        border-radius: 12px;
        color: #4b5563;
      }
      h2 {
        margin-bottom: 64px;
        font-size: 36px;
        line-height: 36px;
        font-weight: 700;
      }
      h3 {
        margin-bottom: 24px;
        font-size: 28px;
        font-weight: 700;
      }
      section {
        margin-bottom: 48px;
      }
      .people {
        display: grid;
        grid-template-columns: 1fr 1fr;
        gap: 32px;
      }
      .person {
        display: flex;
        align-items: center;
        gap: 16px;
        color: #6b7280;
      }
      .person dt {
        font-size: 24px;
        line-height: 32px;
      }
      .person dd {
        color: #111827;
        font-weight: 500;
      }
      .rows {
        display: grid;
        gap: 16px;
      }
      .rows.loose {
        gap: 24px;
      }
      .rows.tall {
        padding-bottom: 16px;
      }
      .row {
        display: flex;
        justify-content: space-between;
      }
      .row dt {
        color: #6b7280;
      }
      .link {
        color: #2f5088;
        font-weight: 500;
      }
      .badge {
        display: flex;
        align-items: center;
        gap: 8px;
        padding: 0 16px;
        border-radius: 12px;
        background: #e9ecf4;
        color: #2f5088;
        font-size: 25px;
      }
      .outline,
      .danger {
        display: flex;
        align-items: center;
        justify-content: center;
        width: 100%;
        gap: 28px;
        border-radius: 12px;
      }
      .outline {
        height: 64px;
        margin-top: 24px;
        border: 2px solid #d1d5db;
        font-size: 25px;
        font-weight: 500;
      }
      .outline .icon {
        width: 28px;
        height: 28px;
        stroke-width: 2;
      }
      .foot {
        padding-top: 32px;
        border-top: 2px solid #d1d5db;
      }
      .last {
        margin-bottom: 32px;
      }
      .last .rows {
        padding-bottom: 2px;
      }
      .danger {
        height: 72px;
        gap: 36px;
        background: #c93832;
        color: #fff;
        font-weight: 500;
      }
      .danger .icon,
      .x .icon {
        width: 24px;
        height: 24px;
        stroke-width: 2;
      }
    `,
  ];

  private person(glyph: "user" | "phone", name: string, value: string, mono = false) {
    return html`<div class="person">
      ${icon(glyph)}
      <div><dt>${name}</dt><dd class=${mono ? "mono" : ""}>${value}</dd></div>
    </div>`;
  }

  private row(name: string, value: unknown, cls = "") {
    return html`<div class="row"><dt>${name}</dt><dd class=${cls}>${value}</dd></div>`;
  }

  render() {
    return html`
      <div class="box" role="dialog" aria-modal="true" aria-labelledby="title">
        <button class="x" aria-label="Close">${icon("close")}</button>
        <h2 id="title">Unit Details</h2>
        <section>
          <h3>Guard Information</h3>
          <dl class="people">
            ${this.person("user", "Name", "Peter Jerome")}
            ${this.person("user", "Employee ID", "G9528071869", true)}
            ${this.person("phone", "Phone", "1997671771")}
          </dl>
        </section>
        <section>
          <h3>Clock Status</h3>
          <dl class="rows">
            ${this.row("Status", "CLOCKED IN", "badge")}
            ${this.row("Last Event", "Mar 24, 2026, 7:00 PM")}
            ${this.row("Hours Worked Today", "0:01")}
          </dl>
        </section>
        <section>
          <h3>Site Information</h3>
          <dl class="rows">
            ${this.row("Site Name", "TEST SITE", "link")}
            ${this.row("Address", "340 6th Ave S Saint Cloud, MN 56301")}
          </dl>
        </section>
        <section>
          <h3>Location</h3>
          <dl class="rows tall">${this.row("Coordinates", "45.556857, -94.155514", "mono")}</dl>
        </section>
        <section class="last">
          <h3>Acknowledgement</h3>
          <dl class="rows loose">
            ${this.row("Status", html`${icon("check", "s24")}Acknowledged`, "badge")}
            ${this.row("Accepted On", "3/17/2026")}
          </dl>
          <button class="outline">${icon("doc")}View Acknowledgement Document</button>
          <button class="outline">${icon("download")}Download PDF</button>
        </section>
        <div class="foot"><button class="danger">${icon("arrow")}Manual Clock Out</button></div>
      </div>
    `;
  }
}

/* ---------- shell ---------- */

@customElement("app-root")
export class AppRoot extends LitElement {
  static styles = [
    base,
    css`
      .page {
        display: flex;
        flex-direction: column;
        height: 100vh;
        padding: 0 14px 0 2px;
        border-left: 4px solid #f4efe2;
        overflow: hidden;
        background: #fff;
      }
      .crumbs {
        display: flex;
        align-items: center;
        gap: 12px;
        height: 104px;
        padding-left: 48px;
        font-size: 27px;
        color: #5b6474;
      }
      .crumbs li {
        display: flex;
        align-items: center;
        gap: 12px;
      }
      .crumbs .icon {
        width: 22px;
        height: 22px;
        stroke-width: 2;
      }
      .crumbs .here {
        color: #12151d;
        font-weight: 500;
      }
      .work {
        flex: 1;
        display: grid;
        grid-template-columns: 760px 1fr;
        gap: 32px;
        min-height: 0;
        margin-top: 32px;
      }
      .flux {
        position: fixed;
        right: 46px;
        bottom: 47px;
        display: flex;
        align-items: center;
        gap: 14px;
        height: 78px;
        padding: 0 30px 0 26px;
        border: 2px solid #4a6595;
        border-radius: 40px;
        background: #33568f;
        color: #fff;
        font-size: 24px;
        font-weight: 600;
        box-shadow: 0 8px 24px rgba(0, 0, 0, 0.3);
      }
      .flux .icon {
        width: 28px;
        height: 28px;
        stroke-width: 2;
      }
      .veil {
        position: fixed;
        inset: 0;
        display: grid;
        place-items: center;
        padding: 0 442px 5px 0;
        background: rgba(0, 0, 0, 0.5);
      }
    `,
  ];

  render() {
    return html`
      <div class="page">
        <top-bar></top-bar>
        <ol class="crumbs">
          <li><a href="#org">Signalix corporation</a>${icon("crumb")}</li>
          <li><a href="#dashboard">Dashboard</a>${icon("crumb")}</li>
          <li class="here">Live</li>
        </ol>
        <status-card></status-card>
        <main class="work">
          <guard-panel></guard-panel>
          <live-map></live-map>
        </main>
        <button class="flux">${icon("bolt")}FLUX</button>
      </div>
      <div class="veil"><unit-dialog></unit-dialog></div>
    `;
  }
}
